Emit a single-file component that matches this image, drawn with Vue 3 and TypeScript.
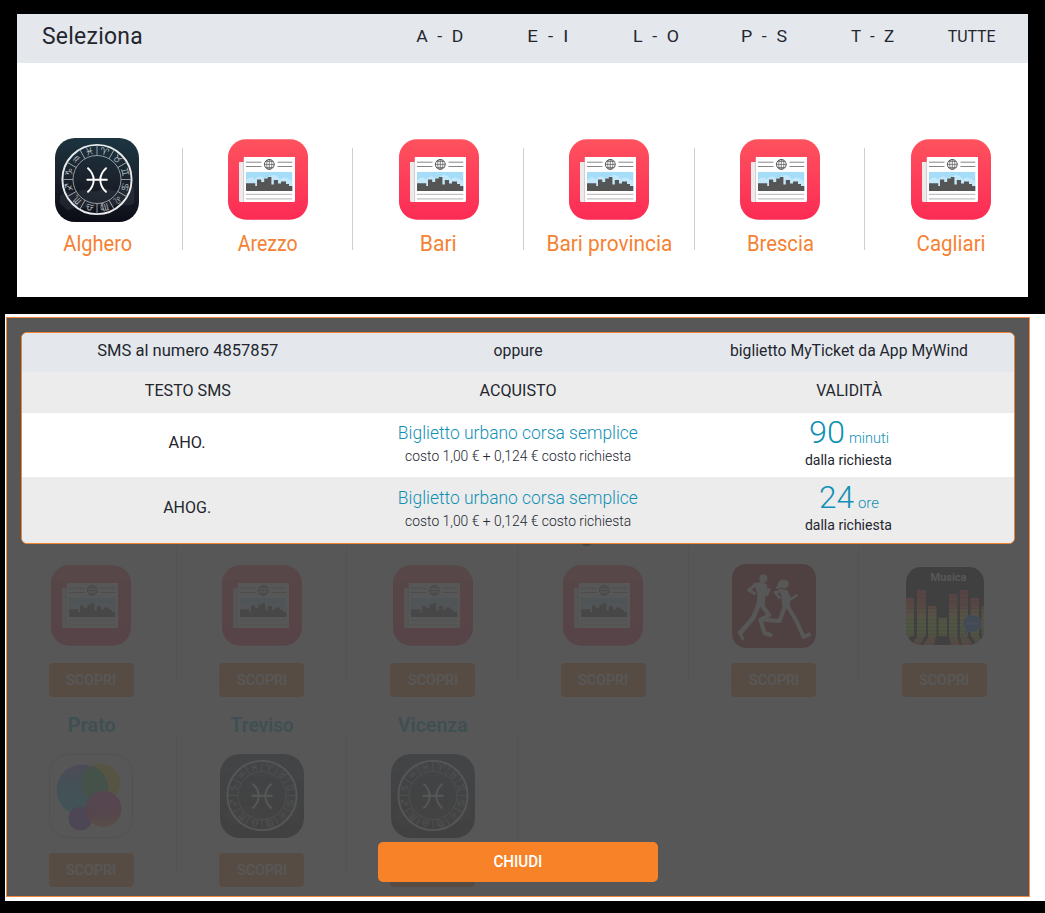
<script setup lang="ts">
import type { Directive } from 'vue'

type IconName = 'zodiac' | 'news' | 'run' | 'music' | 'bubbles'
interface City { name: string; icon: IconName; width: number }
interface Offer { code: string; codeWidth: number; amount: string; amountWidth: number; unit: string; unitWidth: number }

// Condenses a label horizontally until it takes the given width.
const vFit: Directive<HTMLElement, number> = {
  mounted(el, { value }) {
    const natural = el.getBoundingClientRect().width
    if (el.classList.contains('flowfit')) {
      el.style.marginRight = `${value - natural}px`
    }
    el.style.transform = `scaleX(${value / natural})`
  },
}

const ranges = [
  { label: 'A - D', width: 47 },
  { label: 'E - I', width: 41 },
  { label: 'L - O', width: 46 },
  { label: 'P - S', width: 46 },
  { label: 'T - Z', width: 43 },
  { label: 'TUTTE', width: 48 },
]

const cities: City[] = [
  { name: 'Alghero', icon: 'zodiac', width: 69 },
  { name: 'Arezzo', icon: 'news', width: 60 },
  { name: 'Bari', icon: 'news', width: 37 },
  { name: 'Bari provincia', icon: 'news', width: 126 },
  { name: 'Brescia', icon: 'news', width: 67 },
  { name: 'Cagliari', icon: 'news', width: 69 },
]

const backdrop: City[] = [
  { name: '', icon: 'news', width: 0 },
  { name: '', icon: 'news', width: 0 },
  { name: '', icon: 'news', width: 0 },
  { name: '', icon: 'news', width: 0 },
  { name: '', icon: 'run', width: 0 },
  { name: '', icon: 'music', width: 0 },
  { name: 'Prato', icon: 'bubbles', width: 48 },
  { name: 'Treviso', icon: 'zodiac', width: 63 },
  { name: 'Vicenza', icon: 'zodiac', width: 70 },
]

const offers: Offer[] = [
  { code: 'AHO.', codeWidth: 37, amount: '90', amountWidth: 36, unit: 'minuti', unitWidth: 40 },
  { code: 'AHOG.', codeWidth: 48, amount: '24', amountWidth: 35, unit: 'ore', unitWidth: 21 },
]

const signs = ['♈', '♉', '♊', '♋', '♌', '♍', '♎', '♏', '♐', '♑', '♒', '♓']

const bars = [
  { x: 0, w: 8, y: 31 },
  { x: 11, w: 9, y: 23 },
  { x: 22, w: 8.5, y: 39 },
  { x: 32.5, w: 8.5, y: 51 },
  { x: 43, w: 8.5, y: 27 },
  { x: 54, w: 8, y: 23 },
  { x: 64.5, w: 8.5, y: 31 },
  { x: 75.5, w: 2.5, y: 39 },
]
</script>

<template>
  <div class="page">
    <svg class="defs" aria-hidden="true">
      <defs>
        <linearGradient id="newsBg" x1="0" y1="0" x2="0" y2="1">
          <stop offset="0" stop-color="#fe525e" /><stop offset="1" stop-color="#fc2b55" />
        </linearGradient>
        <linearGradient id="nightBg" x1="0.2" y1="0" x2="0.1" y2="1">
          <stop offset="0" stop-color="#1b3440" /><stop offset="0.45" stop-color="#1b222c" /><stop offset="1" stop-color="#0a0b14" />
        </linearGradient>
        <linearGradient id="barFill" gradientUnits="userSpaceOnUse" x1="0" y1="23" x2="0" y2="78">
          <stop offset="0" stop-color="#ff3048" /><stop offset="0.28" stop-color="#ff5a30" />
          <stop offset="0.48" stop-color="#ffe040" /><stop offset="0.65" stop-color="#a0f020" />
          <stop offset="0.8" stop-color="#b8d820" /><stop offset="1" stop-color="#f04030" />
        </linearGradient>
        <linearGradient id="blueBall" x1="0" y1="0" x2="0" y2="1">
          <stop offset="0" stop-color="#a080f0" /><stop offset="0.4" stop-color="#30b8f0" /><stop offset="1" stop-color="#20d0f0" />
        </linearGradient>
        <linearGradient id="pinkBall" x1="0" y1="0" x2="0" y2="1">
          <stop offset="0" stop-color="#f040d0" /><stop offset="0.6" stop-color="#f03880" /><stop offset="1" stop-color="#ff9050" />
        </linearGradient>

        <symbol id="icon-news" viewBox="-2 -1.2 84 84">
          <rect width="80" height="80.5" rx="18" fill="url(#newsBg)" />
          <path d="M11 22.7h7v40h-5.5a1.5 1.5 0 0 1-1.5-1.5z" fill="#eceaea" />
          <path d="M15.8 17.7H67v43.5a1.5 1.5 0 0 1-1.5 1.5H15.8z" fill="#fff" />
          <path d="M15.6 23v39.7" stroke="#c9c0c2" stroke-width=".8" />
          <path d="M18 23h15.5M18 27.3h15.5M49.5 23h14.8M49.5 27.3h14.8" stroke="#666" stroke-width=".8" />
          <circle cx="41.3" cy="25.2" r="4.9" fill="#fff" stroke="#555" stroke-width="1" />
          <path d="M36.2 25.2h10.2M41.3 20v10.4M37.4 22.2h7.8M37.4 28.2h7.8" stroke="#555" stroke-width=".7" />
          <ellipse cx="41.3" cy="25.2" rx="2.6" ry="4.9" fill="none" stroke="#555" stroke-width=".7" />
          <rect x="18" y="32.7" width="46.3" height="19" fill="#a5dcf7" />
          <path d="M18 42c3-6 7-4 9-2 3-4 7-3 9-1l6-2c4-3 8 0 10 3 4-3 7-2 12 2v7H18z" fill="#c2e8fa" />
          <path d="M18 51.7V44h9.2v2.8h1.8v-6.4h4.2v2.4h3v-3.6h3.6v-1.4h3.6v7.4h2.4v-4.4h4.2v3.4h3v-1.8h5v2.4h3v2h3.3v4.900z" fill="#555" />
          <path d="M18 55.2h46.3M18 59.6h46.3" stroke="#c2c2c4" stroke-width="1.2" />
        </symbol>

        <symbol id="icon-zodiac" viewBox="0 0 84 84">
          <rect width="84" height="84" rx="20" fill="url(#nightBg)" />
          <path d="M5 58c8-8 13 0 20-5s12 4 20-1 15 5 20-1 10 1 14-2v16c-8 6-12-2-20 3s-14-3-22 1-14-2-20 2-8-4-12-5z" fill="#555f69" opacity=".22" />
          <circle cx="42" cy="41.5" r="34.6" fill="none" stroke="#e9edf0" stroke-width="1.9" />
          <circle cx="42" cy="41.5" r="24" fill="none" stroke="#aeb5ba" stroke-width=".8" />
          <g v-for="(sign, i) in signs" :key="sign" :transform="`rotate(${i * 30} 42 41.5)`">
            <path d="M42 7v10.5" stroke="#aeb5ba" stroke-width=".8" />
            <text x="42" y="16" transform="rotate(15 42 41.5)" class="sign">{{ sign + '\uFE0E' }}</text>
          </g>
          <path d="M33 30.2c7.6 7 7.6 16.6 0 23.6M51 30.2c-7.6 7-7.6 16.6 0 23.6M32.3 41.7h19.6" fill="none" stroke="#fff" stroke-width="1.9" stroke-linecap="round" />
        </symbol>

        <symbol id="icon-run" viewBox="0 0 84 84">
          <rect width="84" height="84" rx="14" fill="#a50d1a" />
          <g fill="none" stroke="#fff" stroke-linecap="round" stroke-linejoin="round">
            <circle cx="31.3" cy="14.5" r="4" fill="#fff" stroke="none" />
            <path d="M22 19.5l9-1 4 3-2 10-1 10h-7l1-11-2-7z" fill="#fff" stroke-width="1" />
            <path d="M24 20.5l-7.5 5.5 6 3.5M33 22l2 8.5 2-5" stroke-width="3" />
            <path d="M27 40l-6 14L9 68" stroke-width="4.6" /><path d="M7 68l4 7" stroke-width="2.6" />
            <path d="M29 40l8 11-8.5 5 4 13 6 2" stroke-width="4.2" />
            <circle cx="52.5" cy="20" r="4.3" fill="#fff" stroke="none" />
            <path d="M51 16c-5 0-4 5-7 8 3 1 5-1 7-2z" fill="#fff" stroke-width="1" />
            <path d="M48 25.5l7 1 2 7.5 1 9h-7l-1-10z" fill="#fff" stroke-width="1" />
            <path d="M50 26.5l-7 2 4.5 5M55 29l3.5 6.5 6-4" stroke-width="2.6" />
            <path d="M53.5 41L47.5 57l-19-1.5" stroke-width="4" />
            <path d="M55 41l10.5 18 6 14 5.5-2.5" stroke-width="3.8" />
          </g>
        </symbol>

        <symbol id="icon-music" viewBox="-3 -3 84 84">
          <clipPath id="musicClip"><rect width="78" height="78" rx="15" /></clipPath>
          <g clip-path="url(#musicClip)">
            <rect width="78" height="78" />
            <text x="42.5" y="13.5" class="musica">Musica</text>
            <g fill="url(#barFill)">
              <rect v-for="bar in bars" :key="bar.x" :x="bar.x" :y="bar.y" :width="bar.w" :height="69 - bar.y" />
              <path d="M0 69h5l-5 6zM12 69h7l-5 9H5zM23 69h7l-2 9H17zM43 69h8l3 9h-9zM54 69h7l6 9H56zM65 69h8l5 7v2h-7z" />
            </g>
            <path v-for="n in 13" :key="n" :d="`M0 ${23 + n * 3.7}h78`" stroke="#000" stroke-opacity=".5" stroke-width=".7" />
            <path d="M66.7 48a9 8.5 0 1 1-3 16.5l-6 3 2-5a9 8.5 0 0 1 7-14.5z" fill="#1b74e8" stroke="#9ac" stroke-width=".8" />
            <path d="M61 56.5h11" stroke="#8bb9f5" stroke-width="2" stroke-dasharray="2 .6" />
          </g>
        </symbol>

        <symbol id="icon-bubbles" viewBox="0 0 84 84">
          <rect x=".5" y=".5" width="83" height="83" rx="19" fill="#fff" stroke="#bbb" />
          <circle cx="51.5" cy="29" r="19.5" fill="#f5d820" />
          <circle cx="33" cy="36" r="25.5" fill="url(#blueBall)" />
          <path d="M33.5 36A19.5 19.5 0 0 1 43.5 11.5 25.5 25.5 0 0 1 57 46 19.5 19.5 0 0 1 33.5 36z" fill="#38c060" />
          <circle cx="31.5" cy="64.5" r="12" fill="#8a40e0" />
          <circle cx="54.5" cy="55" r="18" fill="url(#pinkBall)" opacity=".93" />
        </symbol>
      </defs>
    </svg>

    <section class="picker">
      <header class="picker-head">
        <h1 class="title"><span v-fit="101" class="fit left">Seleziona</span></h1>
        <nav class="ranges">
          <a v-for="range in ranges" :key="range.label" class="range"><span v-fit="range.width" class="fit">{{ range.label }}</span></a>
        </nav>
      </header>
      <div class="cities">
        <div v-for="city in cities" :key="city.name" class="city">
          <svg class="icon"><use :href="`#icon-${city.icon}`" /></svg>
          <div class="city-name"><span v-fit="city.width" class="fit">{{ city.name }}</span></div>
        </div>
      </div>
    </section>

    <section class="stage">
      <div class="frame">
        <div class="services">
          <div v-for="(item, i) in backdrop" :key="i" class="service" :class="{ tail: i === 3 }">
            <div class="service-name"><span v-if="item.name" v-fit="item.width" class="fit">{{ item.name }}</span></div>
            <svg class="icon"><use :href="`#icon-${item.icon}`" /></svg>
            <div class="discover"><span v-fit="50" class="fit">SCOPRI</span></div>
          </div>
        </div>
        <div class="overlay">
          <div class="dialog">
            <div class="row intro">
              <div class="cell"><span v-fit="181" class="fit">SMS al numero 4857857</span></div>
              <div class="cell"><span v-fit="49" class="fit">oppure</span></div>
              <div class="cell"><span v-fit="238" class="fit">biglietto MyTicket da App MyWind</span></div>
            </div>
            <div class="row heads">
              <div class="cell"><span v-fit="86" class="fit">TESTO SMS</span></div>
              <div class="cell"><span v-fit="77" class="fit">ACQUISTO</span></div>
              <div class="cell"><span v-fit="66" class="fit">VALIDITÀ</span></div>
            </div>
            <div v-for="offer in offers" :key="offer.code" class="row offer">
              <div class="cell code"><span v-fit="offer.codeWidth" class="fit">{{ offer.code }}</span></div>
              <div class="cell ticket">
                <div class="ticket-name"><span v-fit="240" class="fit">Biglietto urbano corsa semplice</span></div>
                <div class="ticket-cost"><span v-fit="226" class="fit">costo 1,00 € + 0,124 € costo richiesta</span></div>
              </div>
              <div class="cell validity">
                <div class="duration">
                  <span v-fit="offer.amountWidth" class="fit left flowfit amount">{{ offer.amount }}</span>
                  <span v-fit="offer.unitWidth" class="fit left flowfit unit">{{ offer.unit }}</span>
                </div>
                <div class="from"><span v-fit="87" class="fit">dalla richiesta</span></div>
              </div>
            </div>
          </div>
          <button class="close" type="button"><span v-fit="49" class="fit">CHIUDI</span></button>
        </div>
      </div>
    </section>
  </div>
</template>

<style>
body {
  margin: 0;
  background: #000;
}
</style>

<style scoped>
.page {
  box-sizing: border-box;
  width: 1045px;
  height: 913px;
  padding-top: 14px;
  background: #000;
  color: #23262e;
  font-family: Roboto, 'Liberation Sans', sans-serif;
  overflow: hidden;
}
.defs { display: block; width: 0; height: 0; }
.fit { display: inline-block; white-space: nowrap; transform-origin: center; }
.fit.left { transform-origin: left; }
.sign { font: 10px 'DejaVu Sans', sans-serif; fill: #b3babf; text-anchor: middle; }
.musica { font: bold 11px Roboto, sans-serif; fill: #fff; text-anchor: middle; }

.picker { width: 1011px; height: 283px; margin-left: 17px; background: #fff; overflow: hidden; }
.picker-head { display: flex; height: 49px; background: #e4e7ec; }
.title { width: 343px; margin: 0; padding-left: 25px; font-size: 24.5px; line-height: 43px; font-weight: 400; letter-spacing: 0.3px; }
.ranges { display: grid; grid-template-columns: repeat(5, 108.4px) 90px; font-size: 17px; line-height: 45px; word-spacing: 5px; }
.range { display: flex; justify-content: center; }
.cities { display: grid; grid-template-columns: repeat(6, 170.67px); margin: 75px 0 0 -5px; }
.city { position: relative; text-align: center; }
.city:not(:last-child)::after { content: ''; position: absolute; top: 10px; right: 0; width: 1px; height: 102px; background: #cfcfd1; }
.icon { display: block; width: 84px; height: 84px; margin: 0 auto; }
.city-name { display: flex; justify-content: center; margin-top: 6px; color: #f58233; font-size: 22px; line-height: 32px; }

.stage { box-sizing: border-box; width: 1040px; height: 587px; margin: 17px 0 0 5px; padding: 3px 0 0 1px; background: #fff; }
.frame { position: relative; box-sizing: border-box; width: 1024px; height: 580px; border: 1px solid #f0883f; overflow: hidden; }
.services { display: grid; grid-template-columns: repeat(6, 170.67px); grid-auto-rows: 190px; margin-left: -1px; padding-top: 201px; }
.service { position: relative; display: flex; flex-direction: column; align-items: center; }
.service::after { content: ''; position: absolute; top: 27px; right: 0; width: 1px; height: 136px; background: #d4d4d4; }
.service:nth-child(6)::after { display: none; }
.service.tail::before { content: ''; position: absolute; top: 24px; left: 64px; width: 9px; height: 3px; border-radius: 0 0 5px 5px; background: #065a78; }
.service-name { height: 30px; color: #00a8c8; font-size: 20.5px; font-weight: 700; line-height: 33px; }
.service .icon { flex: none; margin: 15px 0; }
.discover { display: flex; justify-content: center; width: 85px; height: 34px; border-radius: 4px; background: #f78227; color: #fff; font-size: 15.5px; font-weight: 500; line-height: 34px; }

.overlay { position: absolute; inset: 0; display: flex; flex-direction: column; align-items: center; justify-content: space-between; padding: 14px 0; background: rgba(70, 70, 70, 0.908); }
.dialog { box-sizing: border-box; width: 994px; height: 212px; border: 1px solid #f08330; border-radius: 6px; background: #ececec; overflow: hidden; font-size: 16.8px; }
.row { display: grid; grid-template-columns: repeat(3, 1fr); text-align: center; }
.cell { display: flex; justify-content: center; }
.intro { height: 39px; line-height: 35px; background: #e4e8ed; }
.heads { height: 41px; line-height: 37px; }
.offer { height: 64px; background: #fff; }
.offer:last-child { height: 66px; padding-top: 1px; background: #ececec; }
.code { line-height: 59px; }
.ticket, .validity { flex-direction: column; align-items: center; justify-content: flex-start; }
.ticket { padding-top: 6px; }
.ticket-name { display: flex; height: 25px; color: #1090b5; font-size: 19px; font-weight: 300; line-height: 27px; }
.ticket-cost { display: flex; font-size: 14.5px; font-weight: 300; line-height: 25px; }
.validity { padding-top: 4px; }
.duration { display: flex; align-items: baseline; gap: 4px; height: 30px; color: #1090b5; font-weight: 300; }
.amount { font-size: 31px; line-height: 32px; }
.unit { font-size: 15px; line-height: 16px; }
.from { font-size: 14px; line-height: 26px; }
.close { display: flex; justify-content: center; width: 280px; height: 40px; padding: 0; border: 0; border-radius: 5px; background: #f78227; color: #fff; font: 500 16px/40px Roboto, 'Liberation Sans', sans-serif; }
</style>
